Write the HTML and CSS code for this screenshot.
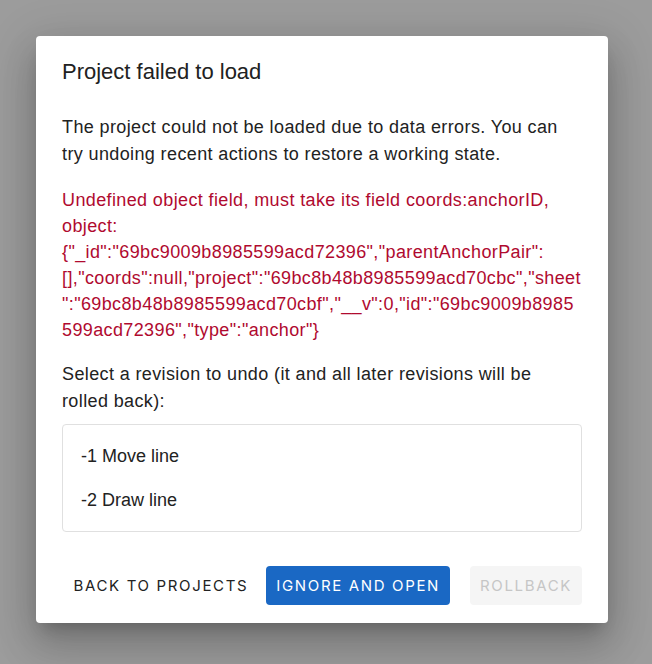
FILE: index.html
```html
<!DOCTYPE html>
<html>
<head>
<meta charset="utf-8">
<link rel="stylesheet" href="styles.css">
</head>
<body>
<div class="backdrop">
  <div class="dialog">
    <h2 class="title">Project failed to load</h2>
    <div class="content">
      <p class="text">The project could not be loaded due to data errors. You can try undoing recent actions to restore a working state.</p>
      <p class="error">Undefined object field, must take its field coords:anchorID, object: {"_id":"69bc9009b8985599acd72396","parentAnchorPair":[],"coords":null,"project":"69bc8b48b8985599acd70cbc","sheet":"69bc8b48b8985599acd70cbf","__v":0,"id":"69bc9009b8985599acd72396","type":"anchor"}</p>
      <p class="text last">Select a revision to undo (it and all later revisions will be rolled back):</p>
      <ul class="list">
        <li class="item">-1 Move line</li>
        <li class="item">-2 Draw line</li>
      </ul>
    </div>
    <div class="actions">
      <button class="btn text-btn">Back to projects</button>
      <button class="btn primary">Ignore and open</button>
      <button class="btn disabled" disabled>Rollback</button>
    </div>
  </div>
</div>
</body>
</html>
```
FILE: styles.css
```css
* { box-sizing: border-box; }
html, body { margin: 0; padding: 0; }
body {
  width: 652px;
  height: 664px;
  background: #9c9c9c;
  font-family: "Liberation Sans", Arial, sans-serif;
  overflow: hidden;
}
.backdrop {
  padding: 36px 44px 0 36px;
}
.dialog {
  width: 572px;
  height: 587px;
  background: #fff;
  border-radius: 4px;
  box-shadow: 0 11px 15px -7px rgba(0,0,0,0.2), 0 24px 38px 3px rgba(0,0,0,0.14), 0 9px 46px 8px rgba(0,0,0,0.12);
  display: flex;
  flex-direction: column;
}
.title {
  margin: 0;
  padding: 22px 26px 0 26px;
  font-size: 22px;
  font-weight: 400;
  color: #212121;
  line-height: 28px;
}
.content {
  padding: 28px 26px 0 26px;
}
.text {
  margin: 0 0 17px 0;
  font-size: 18px;
  line-height: 27px;
  letter-spacing: 0.38px;
  color: #222;
}
.error {
  margin: 0 0 18px 0;
  padding-top: 2px;
  font-size: 18px;
  line-height: 26px;
  letter-spacing: 0.38px;
  color: #b00a2f;
  overflow-wrap: anywhere;
}
.text.last { margin-bottom: 9px; }
.list {
  list-style: none;
  margin: 0;
  padding: 9px 0;
  border: 1px solid #e0e0e0;
  border-radius: 4px;
}
.item {
  padding: 0 18px;
  height: 44px;
  line-height: 44px;
  font-size: 18px;
  color: #222;
}
.actions {
  margin-top: auto;
  padding: 0 26px 18px 26px;
  display: flex;
  justify-content: flex-end;
  align-items: center;
}
.btn {
  flex-shrink: 0;
  white-space: nowrap;
  font-family: Inter, "Liberation Sans", sans-serif;
  font-size: 15px;
  font-weight: 400;
  text-transform: uppercase;
  letter-spacing: 1.65px;
  border: none;
  border-radius: 4px;
  height: 39px;
  padding: 0 10px;
  background: transparent;
  cursor: pointer;
}
.text-btn {
  color: #222;
  margin-right: 8px;
}
.primary {
  background: #1a68c4;
  color: #fff;
  margin-right: 20px;
}
.disabled {
  background: #f5f5f5;
  color: #c6c6c6;
}
```
